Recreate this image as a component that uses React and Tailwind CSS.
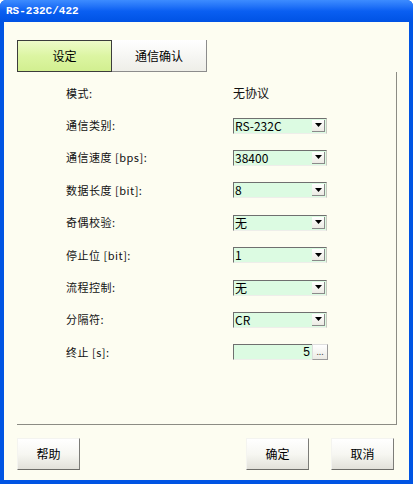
import React from 'react';

const ROWS = [
  { label: '模式:', value: '无协议', kind: 'text' },
  { label: '通信类别:', value: 'RS-232C', kind: 'select' },
  { label: '通信速度 [bps]:', value: '38400', kind: 'select' },
  { label: '数据长度 [bit]:', value: '8', kind: 'select' },
  { label: '奇偶校验:', value: '无', kind: 'select' },
  { label: '停止位 [bit]:', value: '1', kind: 'select' },
  { label: '流程控制:', value: '无', kind: 'select' },
  { label: '分隔符:', value: 'CR', kind: 'select' },
  { label: '终止 [s]:', value: '5', kind: 'input' },
];

const CJK = { fontFamily: '"Noto Sans CJK SC", "Liberation Sans", sans-serif' };

// 下拉框（XP 风格）
function Combo({ value }) {
  return (
    <div className="flex h-[16px] w-[94px] items-center border-t border-l border-[#6f6f6f] border-r border-r-[#c8c8c0] border-b border-b-[#eeeeea] bg-[#dcfbe2]">
      <span className="flex-1 pl-[1px] text-[12px] leading-none text-black" style={CJK}>
        {value}
      </span>
      <div className="mr-[1px] flex h-[12px] w-[13px] items-center justify-center border-r border-b border-[#8a8a8a] bg-gradient-to-b from-white to-[#ecebe4]">
        <svg width="7" height="4" viewBox="0 0 7 4">
          <path d="M0 0h7L3.5 4z" fill="#000" />
        </svg>
      </div>
    </div>
  );
}

function TimeInput({ value }) {
  return (
    <div className="flex h-[16px] items-center">
      <div className="flex h-[16px] w-[79px] items-center justify-end border-t border-l border-[#6f6f6f] border-b border-b-[#eeeeea] bg-[#dcfbe2] pr-[2px] text-[12px] leading-none text-black" style={{ fontFamily: '"Liberation Sans", sans-serif' }}>
        {value}
      </div>
      <div className="flex h-[16px] w-[16px] items-end justify-center border border-[#9a9a9a] border-t-[#dedede] border-l-[#dedede] bg-gradient-to-b from-white to-[#ecebe4] pb-[3px] text-[9px] leading-none text-[#333]">
        ...
      </div>
    </div>
  );
}

function XpButton({ children }) {
  return (
    <button className="flex h-[32px] w-[63px] items-center justify-center border border-[#f4f4f0] border-r-[#7c7c78] border-b-[#6c6c68] bg-gradient-to-b from-white via-[#f7f7f2] to-[#e2e1da] text-[12px] text-black" style={CJK}>
      {children}
    </button>
  );
}

export default function App() {
  return (
    <div className="flex h-[484px] w-[413px] flex-col overflow-hidden rounded-t-[6px] bg-[#0054e3]">
      {/* 标题栏 */}
      <div className="flex h-[22px] items-center bg-gradient-to-b from-[#3d8cff] via-[#0a5ff2] to-[#0052e4] pl-[6px]">
        <span className="text-[11px] font-bold leading-none text-white" style={{ fontFamily: '"Liberation Mono", monospace' }}>
          RS-232C/422
        </span>
      </div>

      <div className="mx-[4px] mb-[4px] flex flex-1 flex-col bg-[#fdfdf1] pt-[18px] pl-[13px] pr-[12px]">
        {/* 选项卡 */}
        <div className="flex h-[32px]">
          <div className="flex w-[95px] items-center justify-center border border-[#3c3c3c] bg-gradient-to-b from-[#eefbc8] via-[#dcf5a2] to-[#d2ef90] text-[12px] text-black" style={CJK}>
            设定
          </div>
          <div className="flex w-[95px] items-center justify-center border-r border-b border-[#8c8c8c] bg-gradient-to-b from-white to-[#eeeee8] text-[12px] text-black" style={CJK}>
            通信确认
          </div>
        </div>

        {/* 面板 */}
        <div className="flex h-[353px] flex-col border-r border-b border-[#8c8c84] pt-[5px]">
          {ROWS.map((row) => (
            <div key={row.label} className="flex h-[32.4px] shrink-0 items-center">
              <div className="w-[216px] pl-[49px] text-[11px] leading-none tracking-[0.5px] text-[#111]" style={CJK}>
                {row.label}
              </div>
              {row.kind === 'text' && (
                <span className="text-[12px] leading-none text-[#111]" style={CJK}>
                  {row.value}
                </span>
              )}
              {row.kind === 'select' && <Combo value={row.value} />}
              {row.kind === 'input' && <TimeInput value={row.value} />}
            </div>
          ))}
        </div>

        {/* 底部按钮 */}
        <div className="mt-[13px] flex pr-[3px]">
          <XpButton>帮助</XpButton>
          <div className="flex-1" />
          <XpButton>确定</XpButton>
          <div className="w-[22px]" />
          <XpButton>取消</XpButton>
        </div>
      </div>
    </div>
  );
}
